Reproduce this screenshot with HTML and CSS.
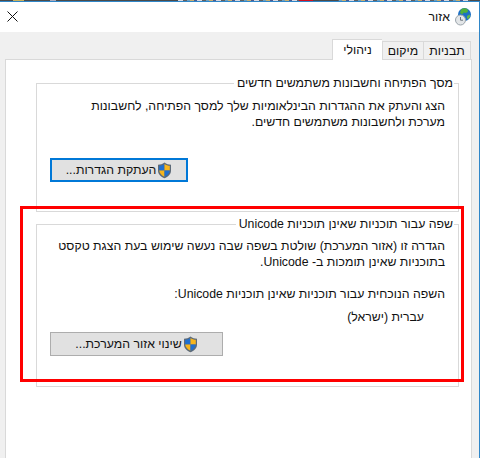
FILE: index.html
```html
<!DOCTYPE html>
<html lang="he" dir="rtl">
<head>
<meta charset="utf-8">
<title>אזור</title>
<link rel="stylesheet" href="styles.css">
</head>
<body>
<div class="strip"></div>
<div class="window">
  <header class="titlebar">
    <div class="title">
      <svg class="globe" width="16" height="18" viewBox="0 0 16 18" aria-hidden="true">
        <circle cx="9.500" cy="6.500" r="6.500" fill="#1c6fc4"/>
        <path d="M6 1.500c2-1.500 5-1.500 6.500-.3l.5 2.300-2 1.500-2.500-.5-1 2-2.500-1.500z" fill="#4fb03a"/>
        <path d="M12 8l2.500-1.500.8 1.800-2 2.700-1.300-.5z" fill="#63b944"/>
        <circle cx="5.500" cy="12" r="5" fill="#e3e6e8" stroke="#9aa3aa"/>
        <path d="M5.500 9v3.200h2.500" fill="none" stroke="#6b747b"/>
      </svg>
      <span>אזור</span>
    </div>
    <button class="close" aria-label="סגירה">
      <svg width="11" height="11" viewBox="0 0 11 11" aria-hidden="true"><path d="M.5.500l10 10M10.500.500l-10 10" stroke="#111" stroke-width="1" fill="none"/></svg>
    </button>
  </header>
  <div class="body">
    <nav class="tabs">
      <span class="tab tab-w1">תבניות</span>
      <span class="tab tab-w2">מיקום</span>
      <span class="tab tab-active">ניהולי</span>
    </nav>
    <main class="panel">
      <fieldset class="group group-welcome">
        <legend>מסך הפתיחה וחשבונות משתמשים חדשים</legend>
        <p class="text">הצג והעתק את ההגדרות הבינלאומיות שלך למסך הפתיחה, לחשבונות<br>מערכת ולחשבונות משתמשים חדשים.</p>
        <button class="btn btn-focus">
          <svg class="shield" width="15" height="17" viewBox="0 0 15 17" aria-hidden="true"><path d="M7.500.500c2 1.500 4 2.200 6.500 2.300v6c0 3.500-3 6-6.500 7.500C4 14.800 1 12.300 1 8.800v-6c2.500-.1 4.500-.8 6.500-2.300z" fill="#5d6a78"/><path d="M7.500 2v6.500H2.200V3.800c2-.1 3.600-.7 5.300-1.800z" fill="#1f6fd0"/><path d="M7.500 2c1.700 1.100 3.300 1.700 5.300 1.800v4.700H7.500z" fill="#f7b51c"/><path d="M2.200 8.500h5.300v6.300c-2.700-1.300-5-3.300-5.300-6.300z" fill="#f7b51c"/><path d="M7.500 8.500h5.300c-.3 3-2.600 5-5.300 6.300z" fill="#1f6fd0"/></svg>
          <span>העתקת הגדרות...</span>
        </button>
      </fieldset>
      <fieldset class="group group-unicode">
        <legend>שפה עבור תוכניות שאינן תוכניות Unicode</legend>
        <p class="text">הגדרה זו (אזור המערכת) שולטת בשפה שבה נעשה שימוש בעת הצגת טקסט<br>בתוכניות שאינן תומכות ב- Unicode.</p>
        <p class="text current">השפה הנוכחית עבור תוכניות שאינן תוכניות Unicode:</p>
        <p class="text lang">עברית (ישראל)</p>
        <button class="btn btn-wide">
          <svg class="shield" width="15" height="17" viewBox="0 0 15 17" aria-hidden="true"><path d="M7.500.500c2 1.500 4 2.200 6.500 2.300v6c0 3.500-3 6-6.500 7.500C4 14.800 1 12.300 1 8.800v-6c2.500-.1 4.500-.8 6.500-2.300z" fill="#5d6a78"/><path d="M7.500 2v6.500H2.200V3.800c2-.1 3.600-.7 5.300-1.800z" fill="#1f6fd0"/><path d="M7.500 2c1.700 1.100 3.300 1.700 5.300 1.800v4.700H7.500z" fill="#f7b51c"/><path d="M2.200 8.500h5.300v6.300c-2.700-1.300-5-3.300-5.300-6.300z" fill="#f7b51c"/><path d="M7.500 8.500h5.300c-.3 3-2.600 5-5.300 6.300z" fill="#1f6fd0"/></svg>
          <span>שינוי אזור המערכת...</span>
        </button>
      </fieldset>
    </main>
  </div>
  <div class="highlight"></div>
</div>
</body>
</html>
```

FILE: styles.css
```css
* { box-sizing: border-box; }
html, body { margin: 0; padding: 0; }
body {
  width: 480px;
  height: 458px;
  overflow: hidden;
  background: #fff;
  font-family: "Liberation Sans", Arial, sans-serif;
  font-size: 12.3px;
  color: #111;
}
.strip {
  height: 1px;
  background:
    linear-gradient(90deg, #4a4a4a 0 13px, #c9b25e 13px 24px, #4a4a4a 24px 50px, #aab 50px 56px, #4a4a4a 56px 178px, transparent 178px 299px, #d01020 299px 313px, #4a4a4a 313px 338px, transparent 338px 470px, #4a4a4a 470px),
    repeating-linear-gradient(90deg, #c8b070 0 4px, #4a5a90 4px 7px, #d8d8e0 7px 12px, #606060 12px 16px, #70a0c0 16px 19px);
}
.window {
  position: relative;
  height: 457px;
  border-top: 1px solid #2f86c8;
  border-right: 1px solid #2f86c8;
  display: flex;
  flex-direction: column;
}
.titlebar {
  height: 30px;
  flex: none;
  display: flex;
  align-items: center;
  justify-content: space-between;
  background: #fff;
  padding: 0 8px 1px 6px;
}
.title { display: flex; align-items: center; gap: 5px; }
.close { border: 0; background: none; padding: 0; display: flex; margin-left: 1px; }
.body {
  flex: 1;
  background: #f0f0f0;
  padding: 7px 7px 0 5px;
  display: flex;
  flex-direction: column;
}
.tabs { display: flex; align-items: flex-end; height: 20px; flex: none; padding-right: 1px; position: relative; z-index: 1; }
.tab {
  height: 18px;
  padding-top: 2px;
  text-align: center;
  border: 1px solid #d9d9d9;
  border-bottom: 0;
}
.tab-w1 { width: 48px; }
.tab-w2 { width: 41px; border-right: 0; }
.tab-active {
  width: 50px;
  height: 21px;
  margin-bottom: -1px;
  background: #fff;
  border-right: 0;
  padding-top: 3px;
}
.panel {
  flex: 1;
  background: #fff;
  border: 1px solid #d9d9d9;
  border-bottom: 0;
  padding: 16px 12px 0 30px;
  display: flex;
  flex-direction: column;
  gap: 5px;
}
.group {
  margin: 0;
  border: 1px solid #d9d9d9;
  padding: 0 13px 0 0;
  min-width: 0;
}
.group legend { padding: 0 1px 0 3px; margin-right: -9px; line-height: 14px; }
.group-welcome { height: 136px; }
.group-unicode { height: 170px; }
.text { margin: 0; line-height: 16px; }
.group-welcome .text { margin-top: 8px; }
.group-unicode .text:first-of-type { margin-top: 7px; }
.group-unicode .current { margin-top: 16px; }
.group-unicode .lang { margin-top: 7px; padding-right: 21px; }
.btn {
  display: flex;
  align-items: center;
  justify-content: center;
  gap: 1px;
  height: 24px;
  padding: 0;
  background: #e1e1e1;
  font: inherit;
  color: #111;
}
.group-welcome .btn { margin: 28px auto 0 13px; }
.group-unicode .btn { margin: 7px auto 0 13px; }
.btn-focus { width: 138px; border: 2px solid #0078d7; }
.btn-wide { width: 173px; border: 1px solid #adadad; }
.highlight {
  position: absolute;
  left: 20px;
  top: 204px;
  width: 444px;
  height: 176px;
  border: 3px solid #f00;
  pointer-events: none;
}
```
